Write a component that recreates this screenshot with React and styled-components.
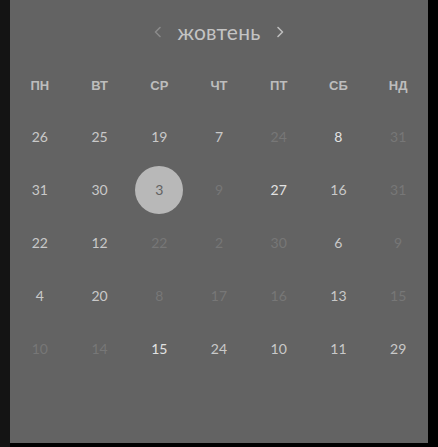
import React from "react";
import styled, { createGlobalStyle } from "styled-components";

const GlobalStyle = createGlobalStyle`
  html, body {
    margin: 0;
    padding: 0;
    background: #000;
  }
  body {
    font-family: Lato, "Noto Sans", sans-serif;
  }
`;

const Screen = styled.div`
  width: 438px;
  height: 447px;
  display: flex;
  background: #000;
`;

const LeftEdge = styled.div`
  width: 10px;
  background: #141414;
`;

const Panel = styled.div`
  width: 418px;
  height: 443px;
  background: #636363;
  display: flex;
  flex-direction: column;
`;

const MonthBar = styled.div`
  height: 64px;
  display: flex;
  align-items: center;
  justify-content: center;
  gap: 15px;
`;

const Arrow = styled.button`
  border: 0;
  background: none;
  padding: 0;
  display: flex;
  color: ${(p) => (p.dim ? "#8a8a8a" : "#bdbdbd")};
`;

const MonthName = styled.span`
  font-size: 21px;
  color: #c4c4c4;
  letter-spacing: 0.2px;
  margin-top: -1px;
`;

const Grid = styled.div`
  display: grid;
  grid-template-columns: repeat(7, 1fr);
`;

const WeekDay = styled.div`
  height: 42px;
  display: flex;
  align-items: center;
  justify-content: center;
  font-family: "Liberation Sans", Arial, sans-serif;
  font-weight: bold;
  font-size: 13px;
  color: #bdbdbd;
  margin-bottom: 4px;
`;

const Cell = styled.div`
  height: 53px;
  display: flex;
  align-items: center;
  justify-content: center;
`;

const colors = {
  normal: "#c9c9c9",
  bright: "#e2e2e2",
  dim: "#777777",
};

const Day = styled.span`
  width: 48px;
  height: 48px;
  border-radius: 50%;
  display: flex;
  align-items: center;
  justify-content: center;
  font-size: 14px;
  color: ${(p) => (p.selected ? "#636363" : colors[p.tone])};
  background: ${(p) => (p.selected ? "#b8b8b8" : "transparent")};
`;

const weekDays = ["ПН", "ВТ", "СР", "ЧТ", "ПТ", "СБ", "НД"];

// n = normal, b = bright, d = dim, s = selected
const rows = [
  [[26, "n"], [25, "n"], [19, "n"], [7, "n"], [24, "d"], [8, "b"], [31, "d"]],
  [[31, "n"], [30, "n"], [3, "s"], [9, "d"], [27, "b"], [16, "n"], [31, "d"]],
  [[22, "n"], [12, "n"], [22, "d"], [2, "d"], [30, "d"], [6, "n"], [9, "d"]],
  [[4, "n"], [20, "n"], [8, "d"], [17, "d"], [16, "d"], [13, "n"], [15, "d"]],
  [[10, "d"], [14, "d"], [15, "b"], [24, "n"], [10, "n"], [11, "n"], [29, "n"]],
];

const toneName = { n: "normal", b: "bright", d: "dim" };

function Chevron({ left }) {
  return (
    <svg width="10" height="12" viewBox="0 0 10 12" fill="none">
      <path
        d={left ? "M7 1.5L2.5 6L7 10.5" : "M3 1.5L7.5 6L3 10.5"}
        stroke="currentColor"
        strokeWidth="1.6"
        strokeLinecap="round"
        strokeLinejoin="round"
      />
    </svg>
  );
}

export default function App() {
  return (
    <Screen>
      <GlobalStyle />
      <LeftEdge />
      <Panel>
        <MonthBar>
          <Arrow dim>
            <Chevron left />
          </Arrow>
          <MonthName>жовтень</MonthName>
          <Arrow>
            <Chevron />
          </Arrow>
        </MonthBar>
        <Grid>
          {weekDays.map((d) => (
            <WeekDay key={d}>{d}</WeekDay>
          ))}
          {rows.flat().map(([num, t], i) => (
            <Cell key={i}>
              <Day selected={t === "s"} tone={toneName[t] || "normal"}>
                {num}
              </Day>
            </Cell>
          ))}
        </Grid>
      </Panel>
    </Screen>
  );
}
